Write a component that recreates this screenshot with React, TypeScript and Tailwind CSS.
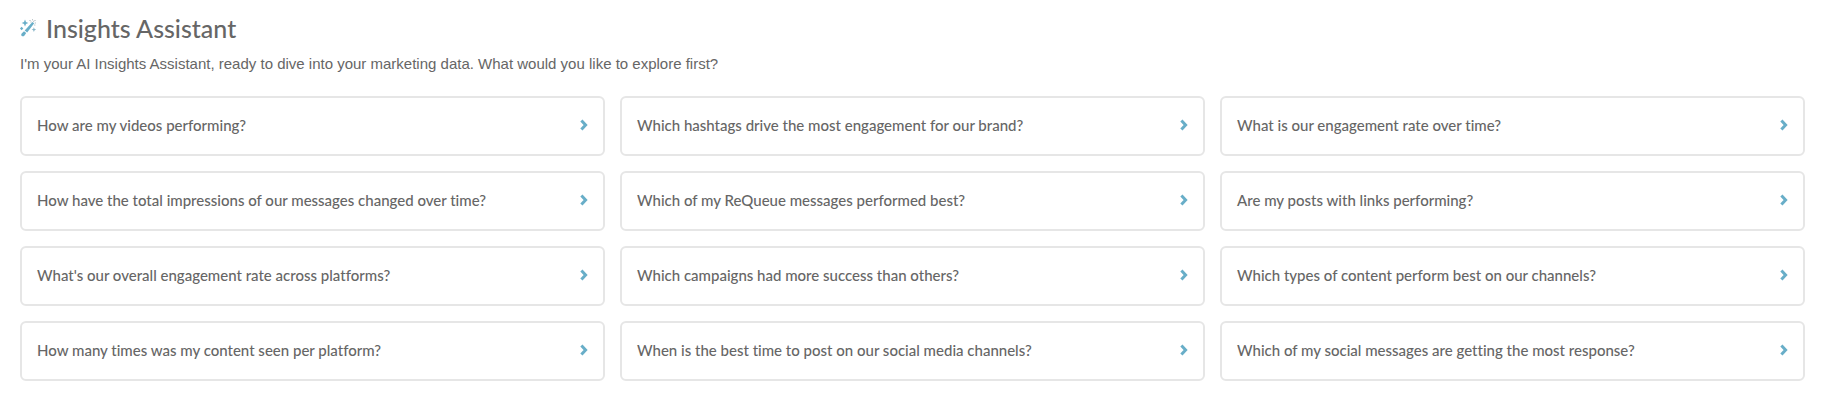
import clsx from 'clsx'

const questions = [
  'How are my videos performing?',
  'Which hashtags drive the most engagement for our brand?',
  'What is our engagement rate over time?',
  'How have the total impressions of our messages changed over time?',
  'Which of my ReQueue messages performed best?',
  'Are my posts with links performing?',
  "What's our overall engagement rate across platforms?",
  'Which campaigns had more success than others?',
  'Which types of content perform best on our channels?',
  'How many times was my content seen per platform?',
  'When is the best time to post on our social media channels?',
  'Which of my social messages are getting the most response?',
]

function WandIcon({ className }: { className?: string }) {
  return (
    <svg viewBox="0 0 16 18" className={className} aria-hidden="true">
      <g fill="#68aec8">
        <path d="M5 .5l1 2.500L8.300 4 6 5 5 7.500 4 5 1.700 4 4 3z" />
        <path d="M12.400 2.900l1.800 1.400-7 9.200-2.500-2z" />
        <path d="M4 12.200l2.200 1.700-1.700 2.600c-.7 1-1.900 1.100-2.700.5s-.8-1.700-.1-2.500z" />
        <path d="M1.600 7.800l1.700 1.700-1.700 1.700L-.1 9.500z" />
      </g>
      <path d="M13.900 8.200l.7 1.700 1.600.7-1.600.7-.7 1.700-.7-1.700-1.600-.7 1.600-.7z" fill="#87b5c7" />
      <path
        d="M9.500 1.500h1M12 .8h1M14.500 1.500h1M10.500 3h1M14.800 4h1M14.300 6h1M13.200 2.300h1"
        stroke="#a5b1b6"
        strokeWidth="1"
      />
    </svg>
  )
}

function ChevronIcon({ className }: { className?: string }) {
  return (
    <svg viewBox="0 0 8 12" className={className} aria-hidden="true">
      <path d="M1.400 1.500L5.600 6l-4.200 4.500" fill="none" stroke="#68aec8" strokeWidth="3" />
    </svg>
  )
}

function QuestionCard({ text }: { text: string }) {
  return (
    <button
      type="button"
      className={clsx(
        'flex h-15 items-center justify-between gap-4 rounded-md border-2 border-[#e6e6e6] bg-white px-[15px] pb-0.5',
        'text-left text-[15px] leading-5 font-medium text-[#666] hover:border-[#68aec8] transition-colors',
      )}
    >
      <span>{text}</span>
      <ChevronIcon className="h-3 w-2 shrink-0" />
    </button>
  )
}

export default function App() {
  return (
    <main className="bg-white pt-3 pr-[22px] pb-7 pl-5 font-[Lato,sans-serif] text-[#666] [font-variant-ligatures:none]">
      <h1 className="flex items-center gap-[10px] text-[25px] leading-8 font-medium">
        <WandIcon className="h-[18px] w-4 shrink-0" />
        Insights Assistant
      </h1>
      <p className="mt-2 font-['Liberation_Sans',Arial,sans-serif] text-[15px] leading-6">
        I'm your AI Insights Assistant, ready to dive into your marketing data. What would you like to explore first?
      </p>
      <div className="mt-5 grid grid-cols-3 gap-[15px]">
        {questions.map((q) => (
          <QuestionCard key={q} text={q} />
        ))}
      </div>
    </main>
  )
}
